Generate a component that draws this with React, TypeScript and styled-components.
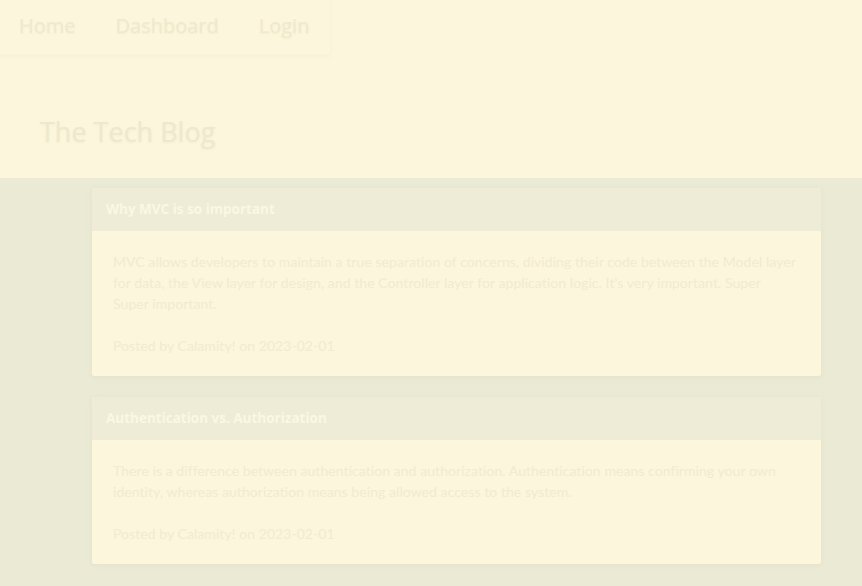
import React from "react";
import styled, { createGlobalStyle } from "styled-components";

const Global = createGlobalStyle`
  html, body { margin: 0; padding: 0; background: #ebead5; }
  body { font-family: "Lato", "Liberation Sans", sans-serif; }
`;

const Header = styled.header`
  background: #fcf6dc;
  height: 178px;
  display: flex;
  flex-direction: column;
`;

const Nav = styled.nav`
  display: flex;
  align-self: flex-start;
  box-shadow: 0 2px 5px rgba(225, 218, 180, 0.18);
`;

const NavLink = styled.a`
  display: block;
  padding: 10px 21px 12px 19px;
  font-family: "Open Sans", sans-serif;
  font-weight: 400;
  font-size: 20px;
  line-height: 32px;
  color: #efe9ce;
  text-decoration: none;
  text-shadow: 0 1px 2px rgba(215, 205, 165, 0.2);
`;

const Title = styled.h1`
  margin: 56px 0 0 40px;
  font-family: "Open Sans", sans-serif;
  font-weight: 400;
  font-size: 27px;
  line-height: 44px;
  color: #ede8ce;
  text-shadow: 0 1px 3px rgba(215, 205, 165, 0.2);
`;

const Main = styled.main`
  padding: 10px 41px 20px 92px;
  display: flex;
  flex-direction: column;
  gap: 21px;
`;

const Card = styled.article`
  background: #fcf6dc;
  box-shadow: 0 1px 4px rgba(205, 200, 165, 0.25);
  border-radius: 2px;
  overflow: hidden;
`;

const CardHead = styled.h2`
  margin: 0;
  background: #eeecd6;
  padding: 12px 14px 12px 14px;
  font-family: "Open Sans", sans-serif;
  font-weight: 700;
  font-size: 13.5px;
  line-height: 19px;
  color: #fbf7e4;
`;

const CardBody = styled.div`
  padding: 20px 23px 20px 21px;
  font-family: "Lato", sans-serif;
  font-size: 14px;
  line-height: 21px;
  color: #f1ebd1;
`;

const Para = styled.p`
  margin: 0 0 21px 0;
  letter-spacing: 0.06px;
`;

const Meta = styled.p`
  margin: 0;
  letter-spacing: 0.06px;
`;

const posts = [
  {
    title: "Why MVC is so important",
    body:
      "MVC allows developers to maintain a true separation of concerns, dividing their code between the Model layer for data, the View layer for design, and the Controller layer for application logic. It's very important. Super Super important.",
  },
  {
    title: "Authentication vs. Authorization",
    body:
      "There is a difference between authentication and authorization. Authentication means confirming your own identity, whereas authorization means being allowed access to the system.",
  },
];

export default function App() {
  return (
    <>
      <Global />
      <Header>
        <Nav>
          <NavLink href="#">Home</NavLink>
          <NavLink href="#">Dashboard</NavLink>
          <NavLink href="#">Login</NavLink>
        </Nav>
        <Title>The Tech Blog</Title>
      </Header>
      <Main>
        {posts.map((p) => (
          <Card key={p.title}>
            <CardHead>{p.title}</CardHead>
            <CardBody>
              <Para>{p.body}</Para>
              <Meta>Posted by Calamity! on 2023-02-01</Meta>
            </CardBody>
          </Card>
        ))}
      </Main>
    </>
  );
}
